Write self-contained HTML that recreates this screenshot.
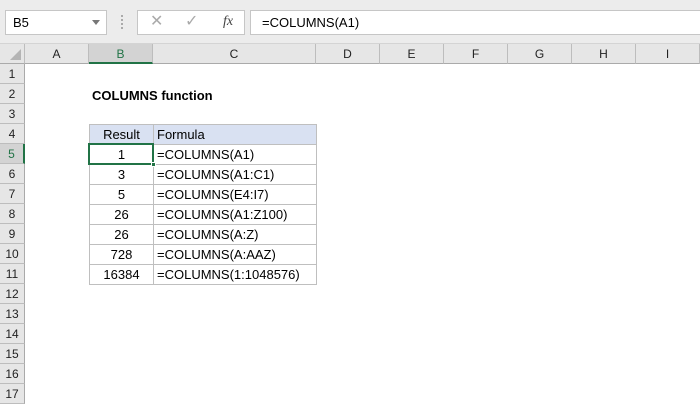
<!DOCTYPE html><html><head><style>
*{margin:0;padding:0;box-sizing:border-box}
body{width:700px;height:400px;overflow:hidden;background:#fff;font-family:"Liberation Sans",sans-serif;font-size:13px;color:#000;position:relative}
.a{position:absolute}
.top{left:0;top:0;width:700px;height:44px;background:#ececec;border-bottom:1px solid #d4d4d4}
.box{background:#fff;border:1px solid #c6c6c6}
.ch{top:44px;height:20px;background:#e6e6e6;border-right:1px solid #bdbdbd;border-bottom:1px solid #aaa;text-align:center;line-height:20px;font-size:12px;color:#222}
.rh{left:0;width:25px;height:20px;background:#e6e6e6;border-bottom:1px solid #bdbdbd;border-right:1px solid #aaa;text-align:center;line-height:20px;font-size:12px;color:#222}
.c{height:20px;line-height:19px;border-right:1px solid #bfbfbf;border-bottom:1px solid #bfbfbf}
</style></head><body>
<div class="a top"></div>
<div class="a box" style="left:5px;top:10px;width:102px;height:25px;line-height:23px;padding-left:7px">B5<span class="a" style="right:6px;top:9px;border-left:4px solid transparent;border-right:4px solid transparent;border-top:5px solid #777"></span></div>
<div class="a" style="left:121px;top:15px;width:2px;height:14px;border-left:2px dotted #aaa"></div>
<div class="a box" style="left:137px;top:10px;width:108px;height:25px;color:#aaa;font-size:16px;line-height:22px"><span class="a" style="left:12px">✕</span><span class="a" style="left:47px">✓</span><span class="a" style="left:85px;color:#444;font-family:'Liberation Serif',serif;font-style:italic;font-size:14px">fx</span></div>
<div class="a box" style="left:250px;top:10px;width:452px;height:25px;line-height:23px;padding-left:11px">=COLUMNS(A1)</div>
<div class="a ch" style="left:0;width:25px"><span class="a" style="right:3px;bottom:3px;border-left:11px solid transparent;border-bottom:11px solid #b4b4b4"></span></div>
<div class="a ch" style="left:25px;width:64px">A</div>
<div class="a ch" style="left:89px;width:64px;background:#d3d3d3;border-bottom:2px solid #217346;color:#217346">B</div>
<div class="a ch" style="left:153px;width:163px">C</div>
<div class="a ch" style="left:316px;width:64px">D</div>
<div class="a ch" style="left:380px;width:64px">E</div>
<div class="a ch" style="left:444px;width:64px">F</div>
<div class="a ch" style="left:508px;width:64px">G</div>
<div class="a ch" style="left:572px;width:64px">H</div>
<div class="a ch" style="left:636px;width:64px">I</div>
<div class="a rh" style="top:64px">1</div><div class="a rh" style="top:84px">2</div><div class="a rh" style="top:104px">3</div><div class="a rh" style="top:124px">4</div>
<div class="a rh" style="top:144px;background:#d3d3d3;border-right:2px solid #217346;color:#217346">5</div>
<div class="a rh" style="top:164px">6</div><div class="a rh" style="top:184px">7</div><div class="a rh" style="top:204px">8</div><div class="a rh" style="top:224px">9</div><div class="a rh" style="top:244px">10</div><div class="a rh" style="top:264px">11</div><div class="a rh" style="top:284px">12</div><div class="a rh" style="top:304px">13</div><div class="a rh" style="top:324px">14</div><div class="a rh" style="top:344px">15</div><div class="a rh" style="top:364px">16</div><div class="a rh" style="top:384px">17</div>
<div class="a" style="left:92px;top:86px;line-height:20px;font-weight:bold">COLUMNS function</div>
<div class="a" style="left:89px;top:124px;width:228px;border-left:1px solid #bfbfbf;border-top:1px solid #bfbfbf">
<div style="display:flex;background:#d9e1f2"><div class="c" style="width:64px;text-align:center">Result</div><div class="c" style="width:163px;padding-left:3px">Formula</div></div>
<div style="display:flex"><div class="c" style="width:64px;text-align:center">1</div><div class="c" style="width:163px;padding-left:3px">=COLUMNS(A1)</div></div>
<div style="display:flex"><div class="c" style="width:64px;text-align:center">3</div><div class="c" style="width:163px;padding-left:3px">=COLUMNS(A1:C1)</div></div>
<div style="display:flex"><div class="c" style="width:64px;text-align:center">5</div><div class="c" style="width:163px;padding-left:3px">=COLUMNS(E4:I7)</div></div>
<div style="display:flex"><div class="c" style="width:64px;text-align:center">26</div><div class="c" style="width:163px;padding-left:3px">=COLUMNS(A1:Z100)</div></div>
<div style="display:flex"><div class="c" style="width:64px;text-align:center">26</div><div class="c" style="width:163px;padding-left:3px">=COLUMNS(A:Z)</div></div>
<div style="display:flex"><div class="c" style="width:64px;text-align:center">728</div><div class="c" style="width:163px;padding-left:3px">=COLUMNS(A:AAZ)</div></div>
<div style="display:flex"><div class="c" style="width:64px;text-align:center">16384</div><div class="c" style="width:163px;padding-left:3px">=COLUMNS(1:1048576)</div></div>
</div>
<div class="a" style="left:88px;top:143px;width:66px;height:22px;border:2px solid #217346"></div>
<div class="a" style="left:151px;top:162px;width:5px;height:5px;background:#217346;border:1px solid #fff"></div>
</body></html>
